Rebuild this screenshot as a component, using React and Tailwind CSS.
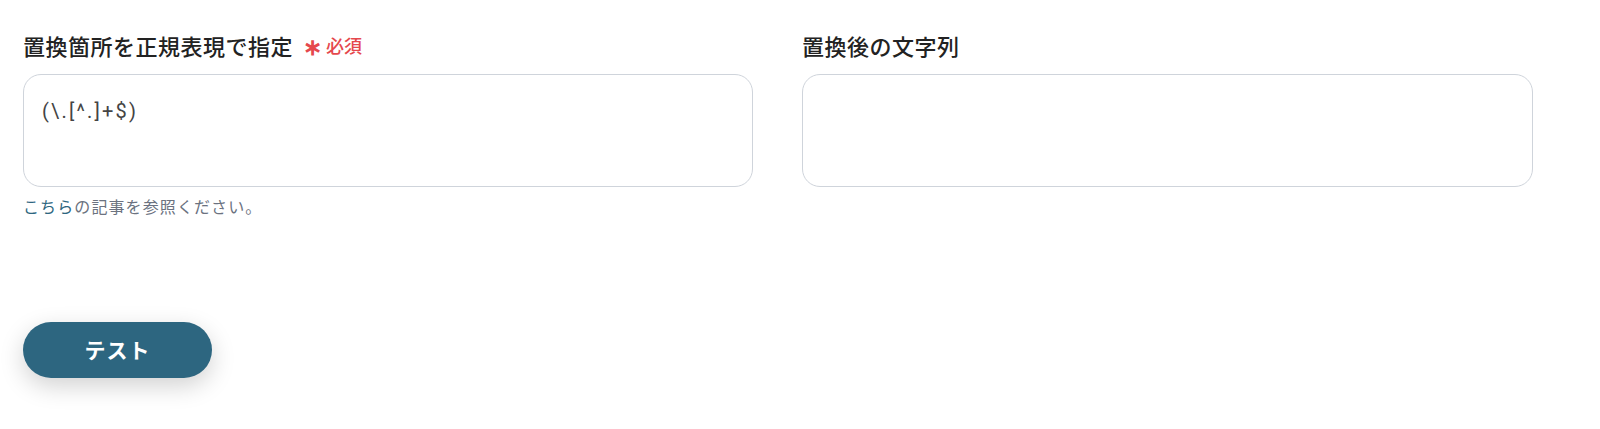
export default function App() {
  return (
    <div
      className="w-[1600px] h-[429px] bg-white px-[23px] pt-[29px]"
      style={{ fontFamily: '"Noto Sans CJK JP", "Noto Sans", sans-serif' }}
    >
      <div className="grid grid-cols-[730px_731px] gap-x-[49px]">
        {/* regex field */}
        <div>
          <div className="h-[32px] flex items-center">
            <span className="text-[22px] font-medium tracking-[0.5px] text-[#222]">置換箇所を正規表現で指定</span>
            <span className="ml-[10px] text-[23px] font-bold leading-none text-[#e5484d]">∗</span>
            <span className="ml-[4px] text-[18px] font-medium text-[#e5484d]">必須</span>
          </div>
          <div
            className="mt-[13px] h-[113px] rounded-[18px] border border-[#cfd4db] px-[18px] pt-[21px] text-[20px] tracking-[2.2px] text-[#444]"
            style={{ fontFamily: 'Roboto, "Noto Sans CJK JP", sans-serif' }}
          >
            (\.[^.]+$)
          </div>
          <p className="mt-[7px] text-[16px] tracking-[1.1px] text-[#6b7280]">
            <span className="text-[#2d6680]">こちら</span>の記事を参照ください。
          </p>
        </div>

        {/* replacement field */}
        <div>
          <div className="h-[32px] flex items-center">
            <span className="text-[22px] font-medium tracking-[0.5px] text-[#222]">置換後の文字列</span>
          </div>
          <div className="mt-[13px] h-[113px] rounded-[18px] border border-[#cfd4db]" />
        </div>
      </div>

      <button className="mt-[104px] w-[189px] h-[56px] rounded-full bg-[#2d6680] text-white text-[21px] font-bold tracking-[1px] shadow-[0_8px_24px_rgba(0,0,0,0.18)]">
        テスト
      </button>
    </div>
  );
}
